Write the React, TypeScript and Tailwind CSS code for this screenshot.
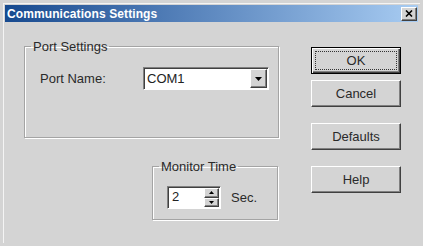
const raised =
  "border border-t-white border-l-white border-r-[#404040] border-b-[#404040] shadow-[inset_-1px_-1px_0_#808080]";
const sunken =
  "border border-t-[#808080] border-l-[#808080] border-r-white border-b-white shadow-[inset_1px_1px_0_#404040]";
const groupBox =
  "border border-[#a4a4a4] shadow-[inset_1px_1px_0_#fff,1px_1px_0_#fff] rounded-none";

const DownArrow = () => (
  <svg width="7" height="4" viewBox="0 0 7 4">
    <path d="M0 0h7L3.5 4z" fill="#000" />
  </svg>
);

const Button = ({ label, isDefault }: { label: string; isDefault?: boolean }) =>
  isDefault ? (
    <button className="w-[90px] h-[27px] flex bg-[#d4d4d4] border border-black shadow-[inset_1px_1px_0_#fff,inset_-1px_-1px_0_#404040,inset_-2px_-2px_0_#808080] text-[13px] text-[#2a2a2a]">
      <span className="flex-1 m-[3px] border border-dotted border-[#333] flex items-center justify-center">
        {label}
      </span>
    </button>
  ) : (
    <button
      className={`w-[90px] h-[27px] flex items-center justify-center bg-[#d4d4d4] text-[13px] text-[#2a2a2a] ${raised}`}
    >
      {label}
    </button>
  );

export default function App() {
  return (
    <div
      className="w-[423px] h-[246px] bg-[#d4d4d4] p-[3px] overflow-hidden"
      style={{ fontFamily: '"Liberation Sans", Arial, sans-serif' }}
    >
      <div className="h-full border-l border-t border-[#f4f4f4] pt-[1px] pl-[1px] pr-[2px]">
        {/* title bar */}
        <div className="h-[17px] flex items-center justify-between bg-gradient-to-r from-[#174a8f] to-[#a8ccf2] pl-[2px] pr-[1px]">
          <span className="text-white font-bold text-[12px] leading-none tracking-[0.1px]">
            Communications Settings
          </span>
          <div className={`w-[16px] h-[14px] flex items-center justify-center bg-[#d4d4d4] ${raised}`}>
            <svg width="8" height="7" viewBox="0 0 8 7">
              <path d="M1 0.5L7 6.5M7 0.5L1 6.5" stroke="#000" strokeWidth="1.6" />
            </svg>
          </div>
        </div>

        <div className="flex">
          <div className="flex flex-col w-[274px]">
            <fieldset className={`ml-[19px] mt-[17px] w-[255px] h-[99px] ${groupBox}`}>
              <legend className="ml-[6px] px-[2px] text-[13px] leading-[15px] text-[#2a2a2a]">
                Port Settings
              </legend>
              <div className="flex items-center pl-[15px] pt-[13px]">
                <span className="w-[103px] text-[13px] text-[#2a2a2a]">Port Name:</span>
                <div className={`w-[126px] h-[23px] flex items-center bg-white ${sunken}`}>
                  <span className="flex-1 pl-[3px] text-[13px] text-[#222]">COM1</span>
                  <div className={`w-[17px] h-[19px] mr-[1px] flex items-center justify-center bg-[#d4d4d4] ${raised}`}>
                    <DownArrow />
                  </div>
                </div>
              </div>
            </fieldset>

            <fieldset className={`ml-[147px] mt-[21px] w-[126px] h-[61px] ${groupBox}`}>
              <legend className="ml-[6px] px-[2px] text-[13px] leading-[15px] text-[#2a2a2a]">
                Monitor Time
              </legend>
              <div className="flex items-center pl-[14px] pt-[12px]">
                <div className={`w-[54px] h-[23px] flex bg-white ${sunken}`}>
                  <span className="flex-1 pl-[4px] text-[13px] leading-[20px] text-[#222]">2</span>
                  <div className="w-[16px] flex flex-col py-[1px] pr-[1px]">
                    <div className={`flex-1 flex items-center justify-center bg-[#d4d4d4] ${raised}`}>
                      <svg width="5" height="3" viewBox="0 0 5 3">
                        <path d="M0 3h5L2.5 0z" fill="#000" />
                      </svg>
                    </div>
                    <div className={`flex-1 flex items-center justify-center bg-[#d4d4d4] ${raised}`}>
                      <svg width="5" height="3" viewBox="0 0 5 3">
                        <path d="M0 0h5L2.5 3z" fill="#000" />
                      </svg>
                    </div>
                  </div>
                </div>
                <span className="ml-[10px] text-[13px] text-[#2a2a2a]">Sec.</span>
              </div>
            </fieldset>
          </div>

          <div className="flex flex-col ml-[32px] mt-[25px]">
            <Button label="OK" isDefault />
            <div className="mt-[6px]">
              <Button label="Cancel" />
            </div>
            <div className="mt-[16px]">
              <Button label="Defaults" />
            </div>
            <div className="mt-[16px]">
              <Button label="Help" />
            </div>
          </div>
        </div>
      </div>
    </div>
  );
}
